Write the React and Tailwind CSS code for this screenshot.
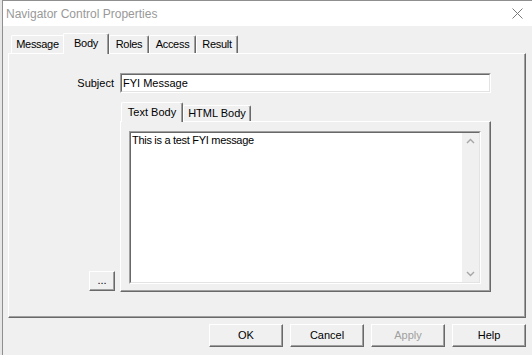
import React from 'react';

const raised =
  'border border-t-white border-l-white border-r-[#696969] border-b-[#696969] shadow-[inset_-1px_-1px_0_#a0a0a0]';

const Tab = ({ label, selected, className = '' }) =>
  selected ? (
    <div
      className={`h-full bg-[#f0f0f0] border-t border-l border-r border-t-white border-l-white border-r-[#696969] shadow-[inset_-1px_0_0_#a0a0a0] rounded-t-[2px] flex justify-center pt-[1px] ${className}`}
    >
      {label}
    </div>
  ) : (
    <div
      className={`mb-[1px] bg-[#f0f0f0] border-t border-l border-r border-t-white border-l-white border-r-[#696969] shadow-[inset_-1px_0_0_#a0a0a0] rounded-t-[2px] flex items-center justify-center ${className}`}
    >
      {label}
    </div>
  );

const Button = ({ children, disabled, className = '' }) => (
  <button
    type="button"
    className={`${raised} bg-[#f0f0f0] flex items-center justify-center ${
      disabled ? 'text-[#a0a0a0]' : 'text-black'
    } ${className}`}
  >
    {children}
  </button>
);

const Chevron = ({ up }) => (
  <svg width="17" height="17" viewBox="0 0 17 17">
    <path
      d={up ? 'M5 10 L8.5 6.5 L12 10' : 'M5 7 L8.5 10.5 L12 7'}
      fill="none"
      stroke="#a6a6a6"
      strokeWidth="1.4"
    />
  </svg>
);

export default function App() {
  return (
    <div className="w-[532px] h-[355px] bg-[#e6e6e6] flex overflow-hidden font-['Liberation_Sans',Arial,sans-serif] text-[11px] text-black">
      <div className="ml-[2px] flex-1 flex flex-col border-l border-t border-[#8f8f8f] bg-[#f0f0f0]">
        {/* title bar */}
        <div className="h-[25px] bg-white flex items-center justify-between pl-[3px] pr-[9px]">
          <span className="text-[12px] text-[#999999]">Navigator Control Properties</span>
          <svg width="11" height="11" viewBox="0 0 11 11">
            <path d="M0.5 0.5 L10.5 10.5 M10.5 0.5 L0.5 10.5" stroke="#7a7a7a" strokeWidth="1" />
          </svg>
        </div>

        <div className="flex-1 flex flex-col pl-[5px] pr-[6px] pt-[7px]">
          {/* tabs */}
          <div className="flex items-end h-[21px] pl-[3px] relative z-10 -mb-[1px] tracking-[-0.3px]">
            <div className="h-[18px] w-[52px] mb-[1px] bg-[#f0f0f0] border-t border-l border-t-white border-l-white rounded-tl-[2px] flex items-center justify-center">
              Message
            </div>
            <Tab label="Body" selected className="w-[46px]" />
            <Tab label="Roles" className="w-[40px] h-[18px]" />
            <Tab label="Access" className="w-[47px] h-[18px]" />
            <Tab label="Result" className="w-[42px] h-[18px]" />
          </div>

          {/* panel */}
          <div className={`h-[265px] ${raised} pt-[19px]`}>
            <div className="flex items-center">
              <div className="w-[105px] text-right">Subject</div>
              <div className="ml-[6px] w-[371px] h-[20px] border border-t-[#a0a0a0] border-l-[#a0a0a0] border-r-white border-b-white flex">
                <div className="flex-1 bg-white border border-t-[#696969] border-l-[#696969] border-r-[#e3e3e3] border-b-[#e3e3e3] flex items-center pl-[1px]">
                  FYI Message
                </div>
              </div>
            </div>

            <div className="flex mt-[9px]">
              <div className="w-[111px] flex justify-end items-end pr-[5px] pb-[1px]">
                <Button className="w-[26px] h-[20px] pb-[2px]">...</Button>
              </div>

              <div className="w-[371px] flex flex-col">
                <div className="flex items-end h-[20px] pl-[1px] relative z-10 -mb-[1px]">
                  <Tab label="Text Body" selected className="w-[62px]" />
                  <Tab label="HTML Body" className="w-[68px] h-[16px]" />
                </div>
                <div className={`h-[171px] ${raised} pl-[8px] pt-[9px]`}>
                  <div className="w-[352px] h-[153px] border border-t-[#a0a0a0] border-l-[#a0a0a0] border-r-white border-b-white flex">
                    <div className="flex-1 flex bg-white border border-t-[#696969] border-l-[#696969] border-r-[#e3e3e3] border-b-[#e3e3e3]">
                      <div className="flex-1 pl-[1px] tracking-[-0.3px] leading-[14px]">
                        This is a test FYI message
                      </div>
                      <div className="w-[17px] bg-[#f0f0f0] flex flex-col justify-between">
                        <Chevron up />
                        <Chevron />
                      </div>
                    </div>
                  </div>
                </div>
              </div>
            </div>
          </div>

          {/* buttons */}
          <div className="flex justify-end gap-[7px] mt-[6px]">
            <Button className="w-[74px] h-[23px]">OK</Button>
            <Button className="w-[74px] h-[23px]">Cancel</Button>
            <Button className="w-[74px] h-[23px]" disabled>
              Apply
            </Button>
            <Button className="w-[74px] h-[23px]">Help</Button>
          </div>
        </div>
      </div>
    </div>
  );
}
